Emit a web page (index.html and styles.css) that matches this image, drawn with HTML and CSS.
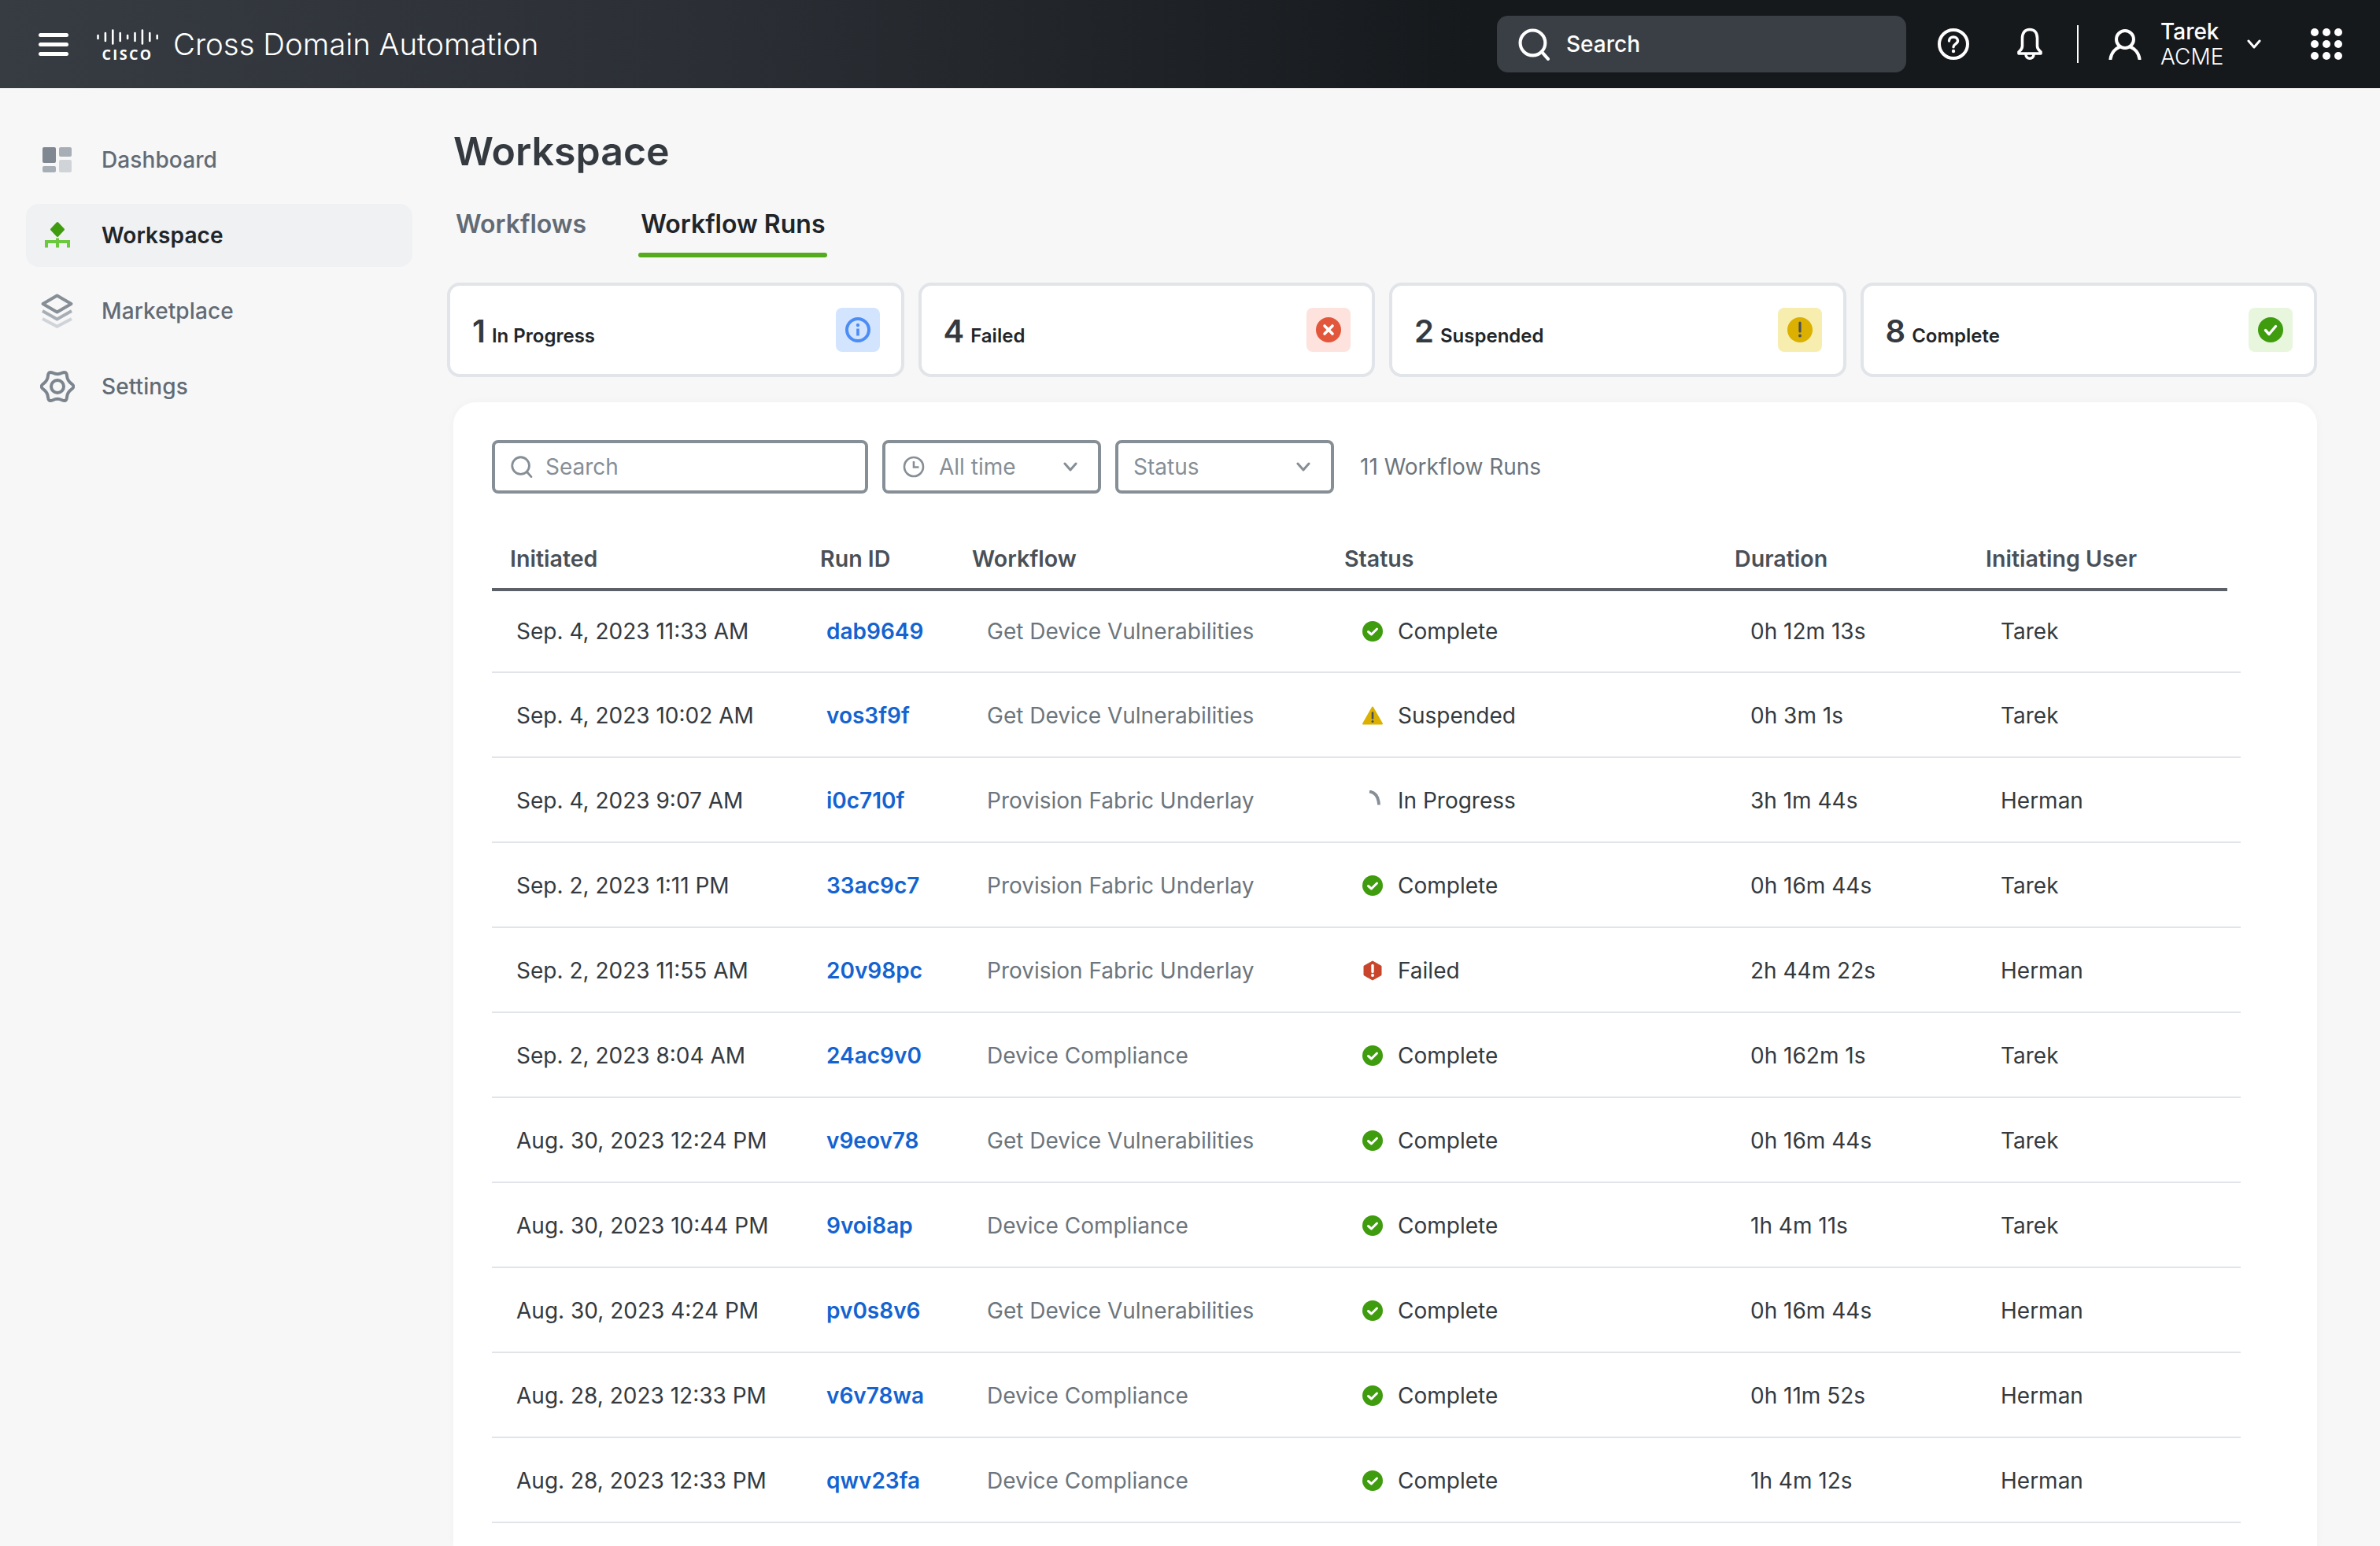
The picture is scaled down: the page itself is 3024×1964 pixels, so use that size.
FILE: index.html
```html
<!DOCTYPE html>
<html lang="en">

<head>
  <meta charset="UTF-8">
  <title>Cross Domain Automation</title>
  <link rel="stylesheet" href="styles.css">
</head>

<body>
  <svg class="sprite" xmlns="http://www.w3.org/2000/svg">
    <symbol id="i-search" viewBox="0 0 40 40">
      <circle cx="18" cy="18" r="15.5" fill="none" stroke="currentColor" stroke-width="4" />
      <path d="M29 29l8 9" fill="none" stroke="currentColor" stroke-width="4" stroke-linecap="round" />
    </symbol>
    <symbol id="i-chevron" viewBox="0 0 20 12">
      <path d="M3 2l7 8 7-8" fill="none" stroke="currentColor" stroke-width="3" stroke-linecap="round" stroke-linejoin="round" />
    </symbol>
    <symbol id="s-complete" viewBox="0 0 26 26">
      <circle cx="13" cy="13" r="13" fill="#3f9c0e" />
      <path d="M7.500 13.500l4 3.500 7-7" fill="none" stroke="#fff" stroke-width="3" stroke-linecap="round" stroke-linejoin="round" />
    </symbol>
    <symbol id="s-suspended" viewBox="0 0 26 26">
      <path d="M13 2.500L25 23.500H1z" fill="#dbb000" stroke="#dbb000" stroke-width="2" stroke-linejoin="round" />
      <path d="M13 9.500v7" stroke="#495057" stroke-width="2.600" stroke-linecap="round" />
      <circle cx="13" cy="20.400" r="1.500" fill="#495057" />
    </symbol>
    <symbol id="s-progress" viewBox="0 0 26 26">
      <path d="M9 1.500c7 1 11.500 6 12 17" fill="none" stroke="#868e96" stroke-width="3.800" />
    </symbol>
    <symbol id="s-failed" viewBox="0 0 26 26">
      <path d="M13 1l11 6.200v11.600L13 25 2 18.800V7.200z" fill="#c8452c" stroke="#c8452c" stroke-linejoin="round" />
      <path d="M13 6.500v8" stroke="#fff" stroke-width="3.400" stroke-linecap="round" />
      <circle cx="13" cy="19" r="2" fill="#fff" />
    </symbol>
  </svg>

  <header class="topbar">
    <button class="menu-btn" aria-label="Menu"><span></span><span></span><span></span></button>
    <div class="cisco-logo">
      <svg width="78" height="20" viewBox="0 0 78 20">
        <g stroke="#fff" stroke-width="2.600" stroke-linecap="round">
          <path d="M1.500 8v4M10.900 5v10M20.300 1.500v17M29.700 5v10M39.100 8v4M48.500 5v10M57.900 1.500v17M67.300 5v10M76.700 8v4" />
        </g>
      </svg>
      <span>cisco</span>
    </div>
    <div class="app-title">Cross Domain Automation</div>
    <div class="global-search">
      <svg class="global-search-icon"><use href="#i-search" /></svg>
      <span>Search</span>
    </div>
    <svg class="top-icon help-icon" viewBox="0 0 40 40">
      <circle cx="20" cy="20" r="18" fill="none" stroke="#fff" stroke-width="4" />
      <path d="M14.500 16c0-3.200 2.400-5 5.500-5s5.500 1.800 5.500 4.800c0 4.200-5.500 4-5.500 8" fill="none" stroke="#fff" stroke-width="3.400" stroke-linecap="round" />
      <circle cx="20" cy="29" r="2.200" fill="#fff" />
    </svg>
    <svg class="top-icon bell-icon" viewBox="0 0 40 42">
      <path d="M20 2.500c-6.500 0-9.500 4.500-9.500 11v10c0 4-2.500 5.500-4.500 7.500v2h28v-2c-2-2-4.500-3.500-4.500-7.500v-10c0-6.500-3-11-9.500-11z" fill="none" stroke="#fff" stroke-width="3.600" stroke-linejoin="round" />
      <path d="M15 34c0 7 10 7 10 0" fill="none" stroke="#fff" stroke-width="3.600" />
    </svg>
    <div class="top-divider"></div>
    <svg class="top-icon user-icon" viewBox="0 0 42 40">
      <circle cx="21" cy="14" r="11" fill="none" stroke="#fff" stroke-width="4" />
      <path d="M2.500 39c1-8 6.500-13.500 11-15M39.500 39c-1-8-6.500-13.500-11-15" fill="none" stroke="#fff" stroke-width="4" stroke-linecap="round" />
    </svg>
    <div class="user-name">
      <div>Tarek</div>
      <div>ACME</div>
    </div>
    <svg class="user-chevron"><use href="#i-chevron" /></svg>
    <div class="app-grid">
      <i></i><i></i><i></i><i></i><i></i><i></i><i></i><i></i><i></i>
    </div>
  </header>

  <div class="layout">
    <nav class="sidebar">
      <a class="nav-item">
        <svg class="nav-icon" viewBox="0 0 44 44">
          <rect x="3" y="6" width="17" height="20" rx="2" fill="#7f8790" />
          <rect x="24" y="6" width="16" height="12" rx="2" fill="#a7aeb6" />
          <rect x="3" y="30" width="17" height="8" rx="2" fill="#a7aeb6" />
          <rect x="24" y="22" width="16" height="16" rx="2" fill="#d0d4d9" />
        </svg>
        Dashboard
      </a>
      <a class="nav-item active">
        <svg class="nav-icon" viewBox="0 0 44 44">
          <path d="M22 6.500l7.500 8-7.500 8-7.500-8z" fill="#3f9c0e" stroke="#3f9c0e" stroke-width="3" stroke-linejoin="round" />
          <path d="M8 37.500V30h28v7.500M22 25.500v12" fill="none" stroke="#6cc83c" stroke-width="4" />
        </svg>
        Workspace
      </a>
      <a class="nav-item">
        <svg class="nav-icon" viewBox="0 0 44 44" fill="none" stroke-width="4">
          <path d="M21.500 2.500L39.500 13l-18 10.500L3.500 13z" stroke="#868e96" stroke-linejoin="round" />
          <path d="M3 22l18.500 10.500L40 22" stroke="#a7aeb6" />
          <path d="M3 32l18.500 9.800L40 32" stroke="#d0d4d9" />
        </svg>
        Marketplace
      </a>
      <a class="nav-item">
        <svg class="nav-icon" viewBox="0 0 44 44" fill="none" stroke="#7c858e" stroke-width="4">
          <path d="M39.780 25.630Q45 22 39.780 18.380Q34.560 14.750 34.030 8.420Q33.500 2.080 27.750 4.790Q22 7.500 16.250 4.790Q10.500 2.080 9.970 8.420Q9.440 14.750 4.220 18.380Q-1 22 4.220 25.630Q9.440 29.250 9.970 35.580Q10.500 41.920 16.250 39.210Q22 36.500 27.750 39.210Q33.500 41.920 34.030 35.580Q34.560 29.250 39.780 25.630z" stroke-linejoin="round" />
          <circle cx="22" cy="22" r="8" />
        </svg>
        Settings
      </a>
    </nav>

    <main class="content">
      <h1 class="page-title">Workspace</h1>
      <div class="tabs">
        <a class="tab">Workflows</a>
        <a class="tab active">Workflow Runs</a>
      </div>

      <section class="summary">
        <div class="summary-card">
          <div class="summary-text"><b>1</b> In Progress</div>
          <div class="summary-icon info">
            <svg viewBox="0 0 32 32">
              <circle cx="16" cy="16" r="14" fill="none" stroke="#4c8df5" stroke-width="4" />
              <circle cx="16" cy="10" r="2.200" fill="#4c8df5" />
              <path d="M16 14.500v9" stroke="#4c8df5" stroke-width="3.600" />
            </svg>
          </div>
        </div>
        <div class="summary-card">
          <div class="summary-text"><b>4</b> Failed</div>
          <div class="summary-icon failed">
            <svg viewBox="0 0 32 32">
              <circle cx="16" cy="16" r="16" fill="#e2573c" />
              <path d="M11 11l10 10M21 11L11 21" stroke="#fff" stroke-width="3.600" stroke-linecap="round" />
            </svg>
          </div>
        </div>
        <div class="summary-card">
          <div class="summary-text"><b>2</b> Suspended</div>
          <div class="summary-icon suspended">
            <svg viewBox="0 0 32 32">
              <circle cx="16" cy="16" r="16" fill="#dbb000" />
              <path d="M16 7v11" stroke="#495057" stroke-width="3.200" stroke-linecap="round" />
              <circle cx="16" cy="23.500" r="2" fill="#495057" />
            </svg>
          </div>
        </div>
        <div class="summary-card">
          <div class="summary-text"><b>8</b> Complete</div>
          <div class="summary-icon complete">
            <svg viewBox="0 0 32 32">
              <circle cx="16" cy="16" r="16" fill="#3f9c0e" />
              <path d="M9.500 16.500l4.500 5 8.500-10" fill="none" stroke="#fff" stroke-width="3.400" stroke-linecap="round" stroke-linejoin="round" />
            </svg>
          </div>
        </div>
      </section>

      <section class="panel">
        <div class="filters">
          <div class="field field-search">
            <svg class="field-icon"><use href="#i-search" /></svg>
            Search
          </div>
          <div class="field field-time">
            <svg class="field-icon" viewBox="0 0 28 28" fill="none" stroke="currentColor" stroke-width="2.600">
              <circle cx="14" cy="14" r="12" />
              <path d="M14 7v7.500h6.500" />
            </svg>
            All time
            <svg class="field-chevron"><use href="#i-chevron" /></svg>
          </div>
          <div class="field field-status">
            Status
            <svg class="field-chevron"><use href="#i-chevron" /></svg>
          </div>
          <span class="run-count">11 Workflow Runs</span>
        </div>

        <div class="runs-head">
          <div>Initiated</div>
          <div>Run ID</div>
          <div>Workflow</div>
          <div>Status</div>
          <div>Duration</div>
          <div>Initiating User</div>
        </div>

        <div class="run-row">
          <div>Sep. 4, 2023 11:33 AM</div>
          <a class="run-id">dab9649</a>
          <div class="run-flow">Get Device Vulnerabilities</div>
          <div class="run-status"><svg><use href="#s-complete" /></svg>Complete</div>
          <div>0h 12m 13s</div>
          <div>Tarek</div>
        </div>
        <div class="run-row">
          <div>Sep. 4, 2023 10:02 AM</div>
          <a class="run-id">vos3f9f</a>
          <div class="run-flow">Get Device Vulnerabilities</div>
          <div class="run-status"><svg><use href="#s-suspended" /></svg>Suspended</div>
          <div>0h 3m 1s</div>
          <div>Tarek</div>
        </div>
        <div class="run-row">
          <div>Sep. 4, 2023 9:07 AM</div>
          <a class="run-id">i0c710f</a>
          <div class="run-flow">Provision Fabric Underlay</div>
          <div class="run-status"><svg><use href="#s-progress" /></svg>In Progress</div>
          <div>3h 1m 44s</div>
          <div>Herman</div>
        </div>
        <div class="run-row">
          <div>Sep. 2, 2023 1:11 PM</div>
          <a class="run-id">33ac9c7</a>
          <div class="run-flow">Provision Fabric Underlay</div>
          <div class="run-status"><svg><use href="#s-complete" /></svg>Complete</div>
          <div>0h 16m 44s</div>
          <div>Tarek</div>
        </div>
        <div class="run-row">
          <div>Sep. 2, 2023 11:55 AM</div>
          <a class="run-id">20v98pc</a>
          <div class="run-flow">Provision Fabric Underlay</div>
          <div class="run-status"><svg><use href="#s-failed" /></svg>Failed</div>
          <div>2h 44m 22s</div>
          <div>Herman</div>
        </div>
        <div class="run-row">
          <div>Sep. 2, 2023 8:04 AM</div>
          <a class="run-id">24ac9v0</a>
          <div class="run-flow">Device Compliance</div>
          <div class="run-status"><svg><use href="#s-complete" /></svg>Complete</div>
          <div>0h 162m 1s</div>
          <div>Tarek</div>
        </div>
        <div class="run-row">
          <div>Aug. 30, 2023 12:24 PM</div>
          <a class="run-id">v9eov78</a>
          <div class="run-flow">Get Device Vulnerabilities</div>
          <div class="run-status"><svg><use href="#s-complete" /></svg>Complete</div>
          <div>0h 16m 44s</div>
          <div>Tarek</div>
        </div>
        <div class="run-row">
          <div>Aug. 30, 2023 10:44 PM</div>
          <a class="run-id">9voi8ap</a>
          <div class="run-flow">Device Compliance</div>
          <div class="run-status"><svg><use href="#s-complete" /></svg>Complete</div>
          <div>1h 4m 11s</div>
          <div>Tarek</div>
        </div>
        <div class="run-row">
          <div>Aug. 30, 2023 4:24 PM</div>
          <a class="run-id">pv0s8v6</a>
          <div class="run-flow">Get Device Vulnerabilities</div>
          <div class="run-status"><svg><use href="#s-complete" /></svg>Complete</div>
          <div>0h 16m 44s</div>
          <div>Herman</div>
        </div>
        <div class="run-row">
          <div>Aug. 28, 2023 12:33 PM</div>
          <a class="run-id">v6v78wa</a>
          <div class="run-flow">Device Compliance</div>
          <div class="run-status"><svg><use href="#s-complete" /></svg>Complete</div>
          <div>0h 11m 52s</div>
          <div>Herman</div>
        </div>
        <div class="run-row">
          <div>Aug. 28, 2023 12:33 PM</div>
          <a class="run-id">qwv23fa</a>
          <div class="run-flow">Device Compliance</div>
          <div class="run-status"><svg><use href="#s-complete" /></svg>Complete</div>
          <div>1h 4m 12s</div>
          <div>Herman</div>
        </div>
      </section>
    </main>
  </div>
</body>

</html>
```

FILE: styles.css
```css
/* Globals */
* {
  box-sizing: border-box;
  margin: 0;
}

body {
  font-family: Inter, 'Noto Sans', sans-serif;
  height: 100vh;
  overflow: hidden;
  background: #f7f7f7;
  color: #343a40;
  display: flex;
  flex-direction: column;
}

.sprite {
  display: none;
}

/* Top bar */
.topbar {
  height: 112px;
  flex: none;
  display: flex;
  align-items: center;
  color: #fff;
  background: linear-gradient(90deg, #373c42, #2b2f35 30%, #16191c 62%, #16191c);
}

.menu-btn {
  width: 38px;
  height: 29px;
  margin-left: 49px;
  padding: 0;
  border: 0;
  background: none;
  display: flex;
  flex-direction: column;
  justify-content: space-between;
}

.menu-btn span {
  display: block;
  height: 5px;
  border-radius: 3px;
  background: #fff;
}

.cisco-logo {
  width: 78px;
  margin-left: 36px;
  display: flex;
  flex-direction: column;
  align-items: center;
  gap: 5px;
}

.cisco-logo span {
  font-family: 'Open Sans', sans-serif;
  font-size: 18px;
  line-height: 14px;
  font-weight: 700;
  letter-spacing: 2.400px;
  text-transform: uppercase;
}

.app-title {
  margin-left: 19px;
  font-size: 38.400px;
  font-weight: 300;
}

.global-search {
  width: 520px;
  height: 72px;
  margin-left: auto;
  padding-left: 27px;
  display: flex;
  align-items: center;
  gap: 20px;
  border-radius: 14px;
  background: #3a3f46;
  font-size: 28px;
  font-weight: 500;
}

.global-search-icon {
  width: 41px;
  height: 41px;
}

.top-icon {
  flex: none;
}

.help-icon {
  width: 40px;
  height: 40px;
  margin-left: 40px;
}

.bell-icon {
  width: 40px;
  height: 42px;
  margin-left: 57px;
}

.top-divider {
  width: 2px;
  height: 48px;
  margin-left: 40px;
  background: #fff;
}

.user-icon {
  width: 42px;
  height: 40px;
  margin-left: 38px;
}

.user-name {
  margin-left: 24px;
  width: 100px;
  font-size: 28px;
  line-height: 32px;
}

.user-name div:first-child {
  font-weight: 500;
}

.user-name div + div {
  font-weight: 300;
}

.user-chevron {
  width: 20px;
  height: 12px;
  margin-left: 9px;
}

.app-grid {
  width: 40px;
  margin-left: 62px;
  margin-right: 48px;
  display: grid;
  grid-template-columns: repeat(3, 10px);
  gap: 5px;
  justify-content: space-between;
}

.app-grid i {
  height: 10px;
  border-radius: 50%;
  background: #fff;
}

/* Sidebar */
.layout {
  flex: 1;
  min-height: 0;
  display: flex;
}

.sidebar {
  width: 568px;
  flex: none;
  padding: 51px 44px 0 33px;
  display: flex;
  flex-direction: column;
  gap: 16px;
}

.nav-item {
  height: 80px;
  padding-left: 18px;
  display: flex;
  align-items: center;
  gap: 34px;
  border-radius: 16px;
  font-size: 28px;
  font-weight: 500;
  letter-spacing: 0.100px;
  color: #626b75;
}

.nav-item.active {
  background: #f0f1f3;
  color: #212529;
  font-weight: 600;
}

.nav-icon {
  width: 44px;
  height: 44px;
  flex: none;
}

/* Main content */
.content {
  flex: 1;
  min-width: 0;
  padding-right: 80px;
  display: flex;
  flex-direction: column;
}

.page-title {
  margin: 48px 0 0 8px;
  font-size: 50px;
  line-height: 64px;
  font-weight: 600;
  color: #343a40;
}

.tabs {
  margin: 37px 0 0 8px;
  display: flex;
  gap: 63px;
}

.tab {
  height: 66px;
  padding: 2px 3px 0;
  font-size: 32px;
  line-height: 44px;
  font-weight: 600;
  color: #626b75;
  border-bottom: 6px solid transparent;
}

.tab.active {
  position: relative;
  color: #212529;
  border-bottom: 0;
}

.tab.active::after {
  content: '';
  position: absolute;
  left: 0;
  right: 0;
  bottom: 0;
  height: 6px;
  border-radius: 3px;
  background: #54ab1c;
}

/* Summary cards */
.summary {
  margin-top: 32px;
  display: grid;
  grid-template-columns: repeat(4, 1fr);
  gap: 18px;
}

.summary-card {
  height: 120px;
  padding: 0 27px 0 28px;
  display: flex;
  align-items: center;
  justify-content: space-between;
  background: #fff;
  border: 4px solid #e1e4e8;
  border-radius: 16px;
  font-size: 24px;
  font-weight: 600;
  color: #212529;
}

.summary-text {
  padding-top: 2px;
}

.summary-card b {
  font-size: 40px;
  font-weight: 600;
  color: #343a40;
  margin-right: 2px;
}

.summary-icon {
  width: 56px;
  height: 56px;
  display: flex;
  align-items: center;
  justify-content: center;
  border-radius: 8px;
}

.summary-icon svg {
  width: 32px;
  height: 32px;
}

.summary-icon.info {
  background: #d3e4ff;
}

.summary-icon.failed {
  background: #fee2dd;
}

.summary-icon.suspended {
  background: #f7edae;
}

.summary-icon.complete {
  background: #e8f6de;
}

/* Runs panel */
.panel {
  flex: 1;
  margin: 32px 0 0 8px;
  padding: 48px 0 0 49px;
  background: #fff;
  border-radius: 28px 28px 0 0;
  box-shadow: 0 0 12px rgb(0 0 0 / 0.03);
}

.filters {
  display: flex;
  align-items: center;
  gap: 18px;
  height: 68px;
  font-size: 28px;
  color: #868e96;
}

.field {
  height: 68px;
  display: flex;
  align-items: center;
  border: 4px solid #868e96;
  border-radius: 8px;
}

.field-search {
  width: 478px;
  padding-left: 20px;
  gap: 16px;
}

.field-time,
.field-status {
  width: 278px;
  justify-content: flex-start;
}

.field-time {
  padding-left: 22px;
  gap: 18px;
}

.field-status {
  padding-left: 19px;
}

.field-icon {
  width: 28px;
  height: 28px;
  flex: none;
}

.field-chevron {
  width: 20px;
  height: 12px;
  margin-left: auto;
  margin-right: 25px;
}

.run-count {
  margin-left: 15px;
  color: #6c757d;
}

/* Runs table */
.runs-head,
.run-row {
  display: grid;
  align-items: center;
}

.runs-head {
  width: 2205px;
  height: 88px;
  margin-top: 36px;
  padding: 11px 0 2px 23px;
  grid-template-columns: 394px 193px 473px 496px 319px 1fr;
  border-bottom: 4px solid #5b6167;
  font-size: 28.600px;
  font-weight: 600;
  color: #495057;
}

.run-row {
  width: 2222px;
  height: 108px;
  padding: 2px 0 0 31px;
  grid-template-columns: 394px 204px 476px 494px 318px 1fr;
  border-bottom: 2px solid #e1e4e8;
  font-size: 28px;
  color: #343a40;
}

.runs-head + .run-row {
  height: 104px;
  padding-top: 0;
}

.run-id {
  color: #1363d1;
  font-weight: 600;
}

.run-flow {
  color: #6c757d;
}

.run-status {
  display: flex;
  align-items: center;
  gap: 19px;
}

.run-status svg {
  width: 26px;
  height: 26px;
  margin-left: 1px;
  flex: none;
}
```
